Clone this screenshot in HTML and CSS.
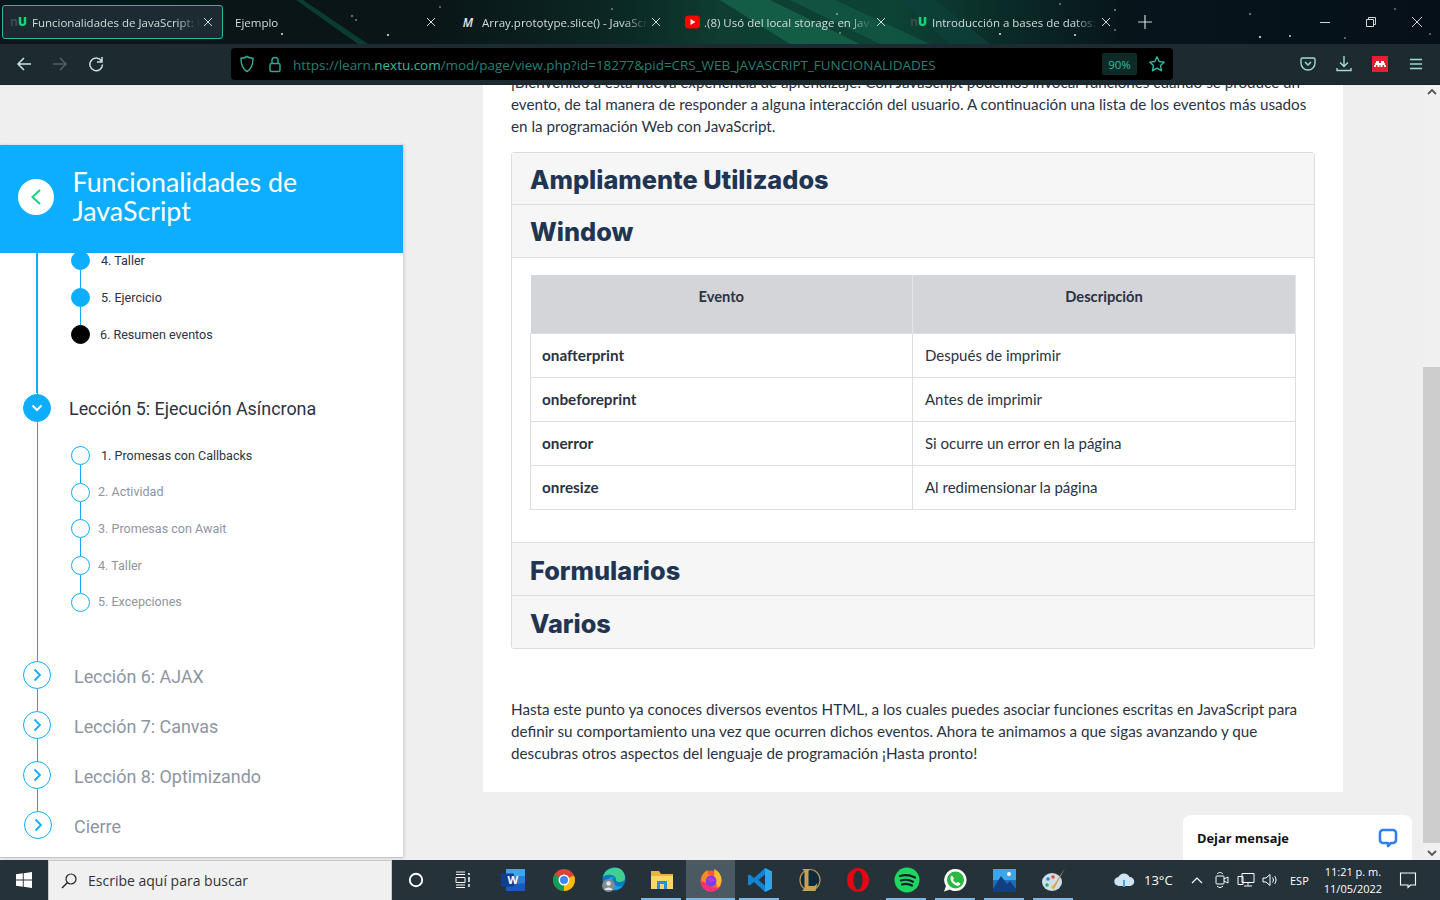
FILE: index.html
```html
<!DOCTYPE html>
<html lang="es">
<head>
<meta charset="utf-8">
<title>Funcionalidades de JavaScript</title>
<link rel="stylesheet" href="styles.css">
</head>
<body>
<div class="browser">
  <header class="tabbar">
    <svg class="space" width="1440" height="44" viewBox="0 0 1440 44" aria-hidden="true">
      <defs>
        <linearGradient id="bg" x1="0" x2="1" y1="0" y2="0">
          <stop offset="0" stop-color="#0c1519"/><stop offset=".3" stop-color="#0a1517"/><stop offset=".44" stop-color="#0b2a25"/><stop offset=".5" stop-color="#0e3d32"/><stop offset=".62" stop-color="#0c4335"/><stop offset=".7" stop-color="#0a2a27"/><stop offset=".78" stop-color="#07151b"/><stop offset="1" stop-color="#061018"/>
        </linearGradient>
      </defs>
      <rect width="1440" height="44" fill="url(#bg)"/>
      <polygon points="296,0 303,0 368,44 358,44" fill="#0a3d30"/>
      <polygon points="720,0 770,0 860,44 790,44" fill="#17694f" opacity=".7"/>
      <polygon points="790,0 835,0 930,44 880,44" fill="#115a46" opacity=".75"/>
      <polygon points="900,0 935,0 990,44 950,44" fill="#0d423a" opacity=".7"/>
      <g fill="#dfe8e8">
        <circle cx="282" cy="34" r="1"/><circle cx="352" cy="16" r=".8"/><circle cx="356" cy="20" r=".7"/><circle cx="388" cy="35" r="1.100"/><circle cx="440" cy="7" r=".7"/><circle cx="540" cy="27" r=".8"/><circle cx="612" cy="9" r=".7"/>
        <circle cx="837" cy="14" r=".8"/><circle cx="840" cy="33" r=".7"/><circle cx="1000" cy="34" r="1"/><circle cx="1075" cy="35" r="1"/><circle cx="1115" cy="10" r=".8"/><circle cx="1250" cy="14" r=".8"/><circle cx="1115" cy="30" r=".7"/><circle cx="1260" cy="37" r="1.100"/><circle cx="1290" cy="36" r=".9"/><circle cx="1345" cy="38" r=".7"/><circle cx="1395" cy="9" r=".7"/><circle cx="1430" cy="34" r=".7"/><circle cx="1060" cy="4" r=".7"/>
      </g>
    </svg>
    <div class="tab tab-active">
      <span class="tab-icon nu"><i>n</i>U</span><span class="tab-title">Funcionalidades de JavaScript: F</span><svg class="tab-close" width="10" height="10" viewBox="0 0 10 10"><path d="M1 1l8 8M9 1L1 9"/></svg>
    </div>
    <div class="tab">
      <span class="tab-title">Ejemplo</span><svg class="tab-close" width="10" height="10" viewBox="0 0 10 10"><path d="M1 1l8 8M9 1L1 9"/></svg>
    </div>
    <div class="tab">
      <span class="tab-icon mdn">M</span><span class="tab-title">Array.prototype.slice() - JavaScript</span><svg class="tab-close" width="10" height="10" viewBox="0 0 10 10"><path d="M1 1l8 8M9 1L1 9"/></svg>
    </div>
    <div class="tab">
      <svg class="tab-icon tab-icon-yt" width="16" height="16" viewBox="0 0 16 16"><rect y="1.500" width="15" height="13" rx="3.500" fill="#f00"/><polygon points="5.500,5 10.500,8 5.500,11" fill="#fff"/></svg><span class="tab-title">.(8) Usó del local storage en Java</span><svg class="tab-close" width="10" height="10" viewBox="0 0 10 10"><path d="M1 1l8 8M9 1L1 9"/></svg>
    </div>
    <div class="tab">
      <span class="tab-icon nu"><i>n</i>U</span><span class="tab-title">Introducción a bases de datos: I</span><svg class="tab-close" width="10" height="10" viewBox="0 0 10 10"><path d="M1 1l8 8M9 1L1 9"/></svg>
    </div>
    <svg class="newtab" width="14" height="14" viewBox="0 0 14 14"><path d="M7 0v14M0 7h14" stroke="#cfd8d8" stroke-width="1.200"/></svg>
    <div class="winctl">
      <svg width="12" height="12" viewBox="0 0 12 12"><path d="M1 6.500h10" stroke="#cfd8d8"/></svg>
      <svg width="12" height="12" viewBox="0 0 12 12"><path d="M1.500 3.500h7v7h-7zM3.500 3.500v-2h7v7h-2" fill="none" stroke="#cfd8d8"/></svg>
      <svg width="12" height="12" viewBox="0 0 12 12"><path d="M1 1l10 10M11 1L1 11" stroke="#cfd8d8"/></svg>
    </div>
  </header>

  <nav class="toolbar">
    <div class="navbtns">
      <svg width="16" height="16" viewBox="0 0 16 16"><path d="M15 8H2M8 2L2 8l6 6" fill="none" stroke="#c9e4e0" stroke-width="1.500"/></svg>
      <svg width="16" height="16" viewBox="0 0 16 16"><path d="M1 8h13M8 2l6 6-6 6" fill="none" stroke="#4e625f" stroke-width="1.500"/></svg>
      <svg width="16" height="16" viewBox="0 0 16 16"><path d="M13.500 5A6.300 6.300 0 1 0 14.500 8.500M14 1v5H9" fill="none" stroke="#c9e4e0" stroke-width="1.500"/></svg>
    </div>
    <div class="urlbar">
      <svg class="url-shield" width="16" height="18" viewBox="0 0 16 18"><path d="M8 1.500c2 1.300 4 1.800 6 1.800 0 6-1 10.500-6 13.200-5-2.700-6-7.200-6-13.200 2 0 4-.5 6-1.800z" fill="none" stroke="#2fa593" stroke-width="1.500"/></svg>
      <svg class="url-lock" width="14" height="17" viewBox="0 0 14 17"><rect x="2" y="7.500" width="10" height="8" rx="1.500" fill="none" stroke="#2fa593" stroke-width="1.500"/><path d="M4 7.500V4.500a3 3 0 0 1 6 0v3" fill="none" stroke="#2fa593" stroke-width="1.500"/></svg>
      <span class="url-text">https://learn.<b>nextu.com</b>/mod/page/view.php?id=18277&amp;pid=CRS_WEB_JAVASCRIPT_FUNCIONALIDADES</span>
      <span class="zoom-badge">90%</span>
      <svg class="url-star" width="18" height="18" viewBox="0 0 18 18"><path d="M9 1.800l2.200 4.700 5.100.6-3.800 3.500 1 5.100L9 13.200l-4.500 2.500 1-5.100L1.700 7.100l5.100-.6z" fill="none" stroke="#35b8a5" stroke-width="1.400" stroke-linejoin="round"/></svg>
    </div>
    <div class="toolicons">
      <svg width="16" height="16" viewBox="0 0 16 16"><path d="M2.500 2h11A1.500 1.500 0 0 1 15 3.500V7A7 7 0 0 1 1 7V3.500A1.500 1.500 0 0 1 2.500 2z" fill="none" stroke="#9fdcd3" stroke-width="1.400"/><path d="M5 6l3 3 3-3" fill="none" stroke="#9fdcd3" stroke-width="1.500"/></svg>
      <svg width="16" height="18" viewBox="0 0 16 18"><path d="M8 1v10M4 7.500L8 11.500l4-4M1 13v2.500h14V13" fill="none" stroke="#9fdcd3" stroke-width="1.400"/></svg>
      <svg width="16" height="16" viewBox="0 0 16 16"><rect width="16" height="16" fill="#e3202f"/><path d="M4 5h3v2H4zM9 5h3v2H9zM3 7h10v2H3zM2 9h2v2H2zM5.500 9h2v2h-2zM8.500 9h2v2h-2zM12 9h2v2h-2z" fill="#fff"/></svg>
      <svg class="menu-icon" width="14" height="14" viewBox="0 0 14 14"><path d="M1 2.500h12M1 7h12M1 11.500h12" stroke="#9fdcd3" stroke-width="1.300"/></svg>
    </div>
  </nav>

  <main class="viewport">
    <aside class="sidebar">
      <div class="course-head">
        <span class="back-circle"><svg width="12" height="16" viewBox="0 0 12 16"><path d="M10 1L2.500 8l7.500 7" fill="none" stroke="#19d27c" stroke-width="2"/></svg></span>
        <h2 class="course-title">Funcionalidades de JavaScript</h2>
      </div>
      <div class="outline">
        <ul class="steps steps-top">
          <li class="step step-done"><span>4. Taller</span></li>
          <li class="step step-done"><span>5. Ejercicio</span></li>
          <li class="step step-current"><span>6. Resumen eventos</span></li>
        </ul>
        <div class="lesson lesson-open">
          <span class="lesson-dot lesson-dot-on"><svg width="14" height="14" viewBox="0 0 14 14"><path d="M2.500 4.500L7 9l4.500-4.500" fill="none" stroke="#fff" stroke-width="2"/></svg></span>
          <span class="lesson-name">Lección 5: Ejecución Asíncrona</span>
        </div>
        <ul class="steps steps-open">
          <li class="step step-active"><span>1. Promesas con Callbacks</span></li>
          <li class="step"><span>2. Actividad</span></li>
          <li class="step"><span>3. Promesas con Await</span></li>
          <li class="step"><span>4. Taller</span></li>
          <li class="step"><span>5. Excepciones</span></li>
        </ul>
        <div class="lesson"><span class="lesson-dot"><svg width="14" height="14" viewBox="0 0 14 14"><path d="M4.500 1.500L10 7l-5.500 5.500" fill="none" stroke="#0dadff" stroke-width="1.800"/></svg></span><span class="lesson-name">Lección 6: AJAX</span></div>
        <div class="lesson"><span class="lesson-dot"><svg width="14" height="14" viewBox="0 0 14 14"><path d="M4.500 1.500L10 7l-5.500 5.500" fill="none" stroke="#0dadff" stroke-width="1.800"/></svg></span><span class="lesson-name">Lección 7: Canvas</span></div>
        <div class="lesson"><span class="lesson-dot"><svg width="14" height="14" viewBox="0 0 14 14"><path d="M4.500 1.500L10 7l-5.500 5.500" fill="none" stroke="#0dadff" stroke-width="1.800"/></svg></span><span class="lesson-name">Lección 8: Optimizando</span></div>
        <div class="lesson lesson-last"><span class="lesson-dot"><svg width="14" height="14" viewBox="0 0 14 14"><path d="M4.500 1.500L10 7l-5.500 5.500" fill="none" stroke="#0dadff" stroke-width="1.800"/></svg></span><span class="lesson-name">Cierre</span></div>
      </div>
    </aside>

    <article class="content">
      <p class="intro">¡Bienvenido a esta nueva experiencia de aprendizaje! Con JavaScript podemos invocar funciones cuando se produce un evento, de tal manera de responder a alguna interacción del usuario. A continuación una lista de los eventos más usados en la programación Web con JavaScript.</p>
      <section class="accordion">
        <h3 class="acc-head acc-first">Ampliamente Utilizados</h3>
        <h3 class="acc-head">Window</h3>
        <div class="acc-body">
          <table class="events">
            <thead><tr><th>Evento</th><th>Descripción</th></tr></thead>
            <tbody>
              <tr><td>onafterprint</td><td>Después de imprimir</td></tr>
              <tr><td>onbeforeprint</td><td>Antes de imprimir</td></tr>
              <tr><td>onerror</td><td>Si ocurre un error en la página</td></tr>
              <tr><td>onresize</td><td>Al redimensionar la página</td></tr>
            </tbody>
          </table>
        </div>
        <h3 class="acc-head acc-form">Formularios</h3>
        <h3 class="acc-head acc-last">Varios</h3>
      </section>
      <p class="outro">Hasta este punto ya conoces diversos eventos HTML, a los cuales puedes asociar funciones escritas en JavaScript para definir su comportamiento una vez que ocurren dichos eventos. Ahora te animamos a que sigas avanzando y que descubras otros aspectos del lenguaje de programación ¡Hasta pronto!</p>
    </article>

    <div class="scrollbar">
      <svg width="10" height="8" viewBox="0 0 10 8"><path d="M1 6l4-4 4 4" fill="none" stroke="#555" stroke-width="1.800"/></svg>
      <div class="scroll-thumb"></div>
      <svg width="10" height="8" viewBox="0 0 10 8"><path d="M1 2l4 4 4-4" fill="none" stroke="#555" stroke-width="1.800"/></svg>
    </div>

    <div class="chat">
      <span>Dejar mensaje</span>
      <svg width="20" height="20" viewBox="0 0 20 20"><path d="M5 2h10a3 3 0 0 1 3 3v7a3 3 0 0 1-3 3h-2l-3 3v-3H5a3 3 0 0 1-3-3V5a3 3 0 0 1 3-3z" fill="none" stroke="#2f80ed" stroke-width="2.600" stroke-linejoin="round"/></svg>
    </div>
  </main>

  <footer class="taskbar">
    <div class="start"><svg width="16" height="16" viewBox="0 0 16 16"><path d="M0 2.300l6.800-1v6.300H0zM7.700 1.200L16 0v7.600H7.700zM0 8.400h6.800v6.300l-6.800-1zM7.700 8.400H16V16l-8.300-1.200z" fill="#fff"/></svg></div>
    <div class="searchbox">
      <svg width="18" height="18" viewBox="0 0 18 18"><circle cx="11" cy="7" r="5" fill="none" stroke="#222" stroke-width="1.200"/><path d="M7.500 10.500L2 16" stroke="#222" stroke-width="1.400"/></svg>
      <span>Escribe aquí para buscar</span>
    </div>
    <div class="taskicons">
      <span class="ti ti-cortana"><svg width="16" height="16" viewBox="0 0 16 16"><circle cx="8" cy="8" r="6.200" fill="none" stroke="#fff" stroke-width="1.900"/></svg></span>
      <span class="ti ti-view"><svg width="18" height="18" viewBox="0 0 18 18"><path d="M1 1h9M1 3.500h9M1 14h9M1 16.500h9M1 6.500h9v5H1z" fill="none" stroke="#fff"/><path d="M14 2v2M14 6v5M14 13v3" stroke="#fff" stroke-width="1.500"/></svg></span>
      <span class="ti ti-word"><svg width="24" height="22" viewBox="0 0 24 22"><rect x="5" y="0" width="19" height="22" rx="1" fill="#2b7cd3"/><rect x="5" y="0" width="19" height="7" fill="#41a5ee"/><rect x="5" y="14.500" width="19" height="7.500" fill="#185abd"/><rect y="4.500" width="13" height="13" rx="1" fill="#103f91"/><text x="6.500" y="14.700" class="wordw">W</text></svg></span>
      <span class="ti"><svg width="24" height="24" viewBox="0 0 24 24"><circle cx="12" cy="12" r="11" fill="#db4437"/><path d="M12 12L22 7.500A11 11 0 0 1 12 23z" fill="#fbbc05"/><path d="M12 12L12 23A11 11 0 0 1 2.500 6.500z" fill="#0f9d58"/><circle cx="12" cy="12" r="5.500" fill="#fff"/><circle cx="12" cy="12" r="4" fill="#4285f4"/></svg></span>
      <span class="ti"><svg width="26" height="26" viewBox="0 0 26 26"><circle cx="14" cy="12" r="11.500" fill="#0a7ac2"/><path d="M3 10C5 2 13 0 18 1c4 1 7 5 7 10 0 3-3 4-6 4-2 0-3-1-3-2 1-5-9-7-13-3z" fill="#3fcf8e"/><path d="M8 14c0-4 5-5 7-3-3 0-3 3-1 6 2 3 6 3 9 1-2 3-5 5-9 5-3 0-6-4-6-9z" fill="#1a9fe0"/><circle cx="8.500" cy="18.500" r="6.500" fill="#7f8b90"/><circle cx="8.500" cy="16.500" r="2.300" fill="#e3e6e8"/><path d="M4.500 23c0-3.500 8-3.500 8 0z" fill="#e3e6e8"/></svg></span>
      <span class="ti ti-run"><svg width="22" height="20" viewBox="0 0 22 20"><path d="M0 1h8l2 3h12v15H0z" fill="#e9b33a"/><rect y="6" width="22" height="13" fill="#ffd766"/><rect x="6" y="11" width="10" height="8" fill="#2b8fd8"/><rect x="9" y="14" width="4" height="5" fill="#ffd766"/></svg></span>
      <span class="ti ti-on"><svg width="24" height="24" viewBox="0 0 24 24"><circle cx="12" cy="13" r="10.500" fill="#ff5a3c"/><path d="M15 1c5 2 8 7 7.500 12-.5 4-2.500 7-5 8.500 1-3 0-8-3-11 1-2 1-5 .5-9.500z" fill="#ffbd2e"/><path d="M2 14c0 5 5 9.500 10 9.500 4 0 8-2 10-6-3 3-9 3-12 0-2-2-3-3-8-3.500z" fill="#ff2d7a"/><circle cx="12" cy="13" r="5.500" fill="#7542e5"/><path d="M8 11c2-2.500 6-2.500 8 .5-1 3.500-6.500 4-8-.5z" fill="#b833e1"/><path d="M2 12C3 6 6 3 9 2 8 5 9 7 12 7 8 8 6 11 7 15z" fill="#ff8a1f"/></svg></span>
      <span class="ti ti-run"><svg width="26" height="26" viewBox="0 0 26 26"><path d="M18 1l7 3.500v17L18 25 7 15l-4.500 3.500L1 17.500V8.500L2.500 7.500 7 11zM18 7.500L11.500 13l6.500 5.500z" fill="#0e86d4"/><path d="M18 1l7 3.500v17L18 25z" fill="#2aa7ed"/></svg></span>
      <span class="ti"><svg width="24" height="26" viewBox="0 0 24 26"><ellipse cx="13" cy="13" rx="10" ry="10.500" fill="#0c2a3a" stroke="#b8985a" stroke-width="1.200"/><path d="M5 2h8l-1.500 2v15h6l3-3-2 8H5l2.500-3V4z" fill="#c8a05a"/></svg></span>
      <span class="ti"><svg width="24" height="26" viewBox="0 0 24 26"><ellipse cx="12" cy="13" rx="11" ry="12" fill="#e30613"/><ellipse cx="12" cy="13" rx="4.500" ry="9.500" fill="#25323a"/></svg></span>
      <span class="ti ti-run"><svg width="26" height="26" viewBox="0 0 26 26"><circle cx="13" cy="13" r="12.500" fill="#1ed760"/><path d="M6 9c5-1.500 10-1 15 1.500M7 13.500c4-1.200 8.500-.8 12 1.300M8 17.500c3-1 7-.8 10 1" fill="none" stroke="#10202a" stroke-width="2.200" stroke-linecap="round"/></svg></span>
      <span class="ti ti-run"><svg width="25" height="25" viewBox="0 0 25 25"><path d="M12.500 1a11 11 0 0 1 0 22c-2 0-4-.5-5.500-1.500L1 23.500l2-5.500A11 11 0 0 1 12.500 1z" fill="#fff"/><circle cx="12.500" cy="12" r="8.500" fill="#2bb741"/><path d="M9 7.500l2 3-1 1.500c1 1.500 2 2.500 3.500 3l1.500-1 2.500 1.500c-.5 2-2.500 2.500-4 2-3-1-5.500-3.500-6-6.500-.2-1.500.5-3 1.500-3.500z" fill="#fff"/></svg></span>
      <span class="ti ti-run"><svg width="23" height="23" viewBox="0 0 23 23"><rect width="23" height="23" fill="#1b6fb5"/><rect width="23" height="11" fill="#39a7e8"/><circle cx="16" cy="5" r="2" fill="#fff"/><path d="M0 20L8 7l6 8 3-3 6 8v3H0z" fill="#123f83"/></svg></span>
      <span class="ti ti-run"><svg width="26" height="26" viewBox="0 0 26 26"><ellipse cx="11" cy="15" rx="10" ry="9" fill="#cfdfe8"/><circle cx="7" cy="12" r="1.800" fill="#2f80ed"/><circle cx="12" cy="10" r="1.800" fill="#e74c3c"/><circle cx="6" cy="18" r="1.800" fill="#27ae60"/><circle cx="12" cy="20" r="1.800" fill="#f1c40f"/><path d="M24 1L14 20l-2 3 1-5z" fill="#d39c4a"/></svg></span>
    </div>
    <div class="tray">
      <svg width="22" height="16" viewBox="0 0 22 16"><path d="M6 14a4.500 4.500 0 0 1-.5-9A6 6 0 0 1 16.500 5 4.500 4.500 0 0 1 17 14z" fill="#cfe4f5"/><path d="M11 8v7" stroke="#4aa3e0" stroke-width="2"/></svg>
      <span class="temp">13°C</span>
      <svg class="tray-chev" width="12" height="8" viewBox="0 0 12 8"><path d="M1 7l5-5 5 5" fill="none" stroke="#fff" stroke-width="1.200"/></svg>
      <svg class="tray-meet" width="16" height="18" viewBox="0 0 16 18"><rect x="2" y="5" width="8" height="8" rx="1" fill="none" stroke="#fff"/><path d="M10 8l4-2v6l-4-2M3 3c2-2 4-2 6 0M3 15c2 2 4 2 6 0" fill="none" stroke="#fff"/></svg>
      <svg class="tray-net" width="18" height="16" viewBox="0 0 18 16"><path d="M5 1.500h12v9H5zM1 4.500h5v8H1zM11 10.500v3M7 14h8" fill="#25323a" stroke="#fff"/></svg>
      <svg class="tray-net" width="16" height="14" viewBox="0 0 16 14"><path d="M1 5h3l4-3.500v11L4 9H1zM10.500 4.500c1.200 1.500 1.200 3.500 0 5M12.500 3c2 2.300 2 5.700 0 8" fill="none" stroke="#fff"/></svg>
      <span class="lang">ESP</span>
      <div class="clock"><span>11:21 p. m.</span><span>11/05/2022</span></div>
      <svg class="notif" width="18" height="18" viewBox="0 0 18 18"><path d="M1.500 2h15v12h-5l-2.500 2.500V14h-7.500z" fill="none" stroke="#fff" stroke-width="1.100"/></svg>
    </div>
  </footer>
</div>
</body>
</html>
```
FILE: styles.css
```css
* { box-sizing: border-box; }
html, body { margin: 0; height: 100%; overflow: hidden; }
body { font-family: "Open Sans", "Noto Sans", sans-serif; }
ul { list-style: none; margin: 0; padding: 0; }

.browser { width: 1440px; height: 900px; display: flex; flex-direction: column; }

/* Tab strip */
.tabbar { position: relative; flex: 0 0 44px; display: flex; align-items: center; padding-left: 2px; overflow: hidden; background: #0b1518; }
.space { position: absolute; left: 0; top: 0; }
.tab { position: relative; flex: 0 0 225px; min-width: 0; height: 34px; display: flex; align-items: center; padding: 0 13px 0 8px; color: #d3dcdc; font-size: 11.500px; }
.tab-active { flex-basis: 221px; margin-right: 4px; border: 1px solid #2cb8a0; border-radius: 3px; background: #1c2a31; padding: 0 6px 0 7px; }
.tab-icon { flex: 0 0 16px; width: 16px; margin-right: 6px; text-align: right; }
.tab-icon-yt { margin-right: 3px; }
.nu { color: #19d27c; font-weight: 800; font-size: 12px; line-height: 1; }
.nu i { font-style: normal; color: #3d4b52; font-weight: 700; }
.mdn { color: #e8e8e8; font-style: italic; font-weight: 600; font-size: 12px; text-align: center; }
.tab-title { flex: 1; min-width: 0; overflow: hidden; white-space: nowrap; -webkit-mask-image: linear-gradient(90deg, #000 86%, transparent); mask-image: linear-gradient(90deg, #000 86%, transparent); }
.tab-close { flex: 0 0 10px; margin-left: 3px; margin-right: 3px; stroke: #d3dcdc; stroke-width: 1; }
.newtab { position: relative; margin-left: 11px; }
.winctl { position: absolute; right: 17px; top: 16px; display: flex; gap: 34px; }

/* Toolbar */
.toolbar { flex: 0 0 41px; display: flex; align-items: center; background: #1d2a30; border-bottom: 1px solid #18242a; }
.navbtns { flex: 0 0 231px; display: flex; gap: 20px; padding-left: 16px; }
.urlbar { flex: 0 0 942px; height: 32px; display: flex; align-items: center; background: #000; border-radius: 4px; padding: 0 7px 0 8px; }
.url-lock { margin-left: 13px; }
.url-text { flex: 1; margin-left: 11px; padding-top: 1px; color: #267f73; font-size: 13.500px; white-space: nowrap; letter-spacing: -.04px; }
.url-text b { color: #37b7a3; font-weight: 400; }
.zoom-badge { width: 35px; height: 22px; margin-right: 11px; display: flex; align-items: center; justify-content: center; background: #0c2b26; border-radius: 2px; color: #35b8a5; font-size: 11.500px; }
.toolicons { flex: 1; display: flex; align-items: center; gap: 20px; padding-left: 127px; }
.menu-icon { margin-left: 1px; }

/* Page */
.viewport { position: relative; flex: 1; min-height: 0; display: flex; background: #efefef; padding-left: 483px; overflow: hidden; }
.sidebar { position: absolute; left: 0; top: 60px; width: 403px; height: 713px; display: flex; flex-direction: column; background: #fff; border-bottom: 1px solid #c6c6c6; box-shadow: 1px 0 3px rgba(0,0,0,.16); font-family: Roboto, sans-serif; }
.course-head { flex: 0 0 108px; display: flex; align-items: center; padding: 0 90px 0 18px; background: #0dadff; }
.back-circle { flex: 0 0 36px; height: 36px; margin-bottom: 5px; display: flex; align-items: center; justify-content: center; border-radius: 50%; background: #fff; }
.course-title { margin: 0 0 5px 18.500px; color: #fff; font-family: Lato, sans-serif; font-weight: 400; font-size: 26.800px; line-height: 29px; }
.outline { position: relative; flex: 1; min-height: 0; overflow: hidden; padding-left: 23px; }
.outline::before { content: ""; position: absolute; left: 36px; top: 0; width: 2px; height: 140px; background: #0dadff; }
.outline::after { content: ""; position: absolute; left: 37px; top: 140px; width: 1px; height: 420px; background: #0dadff; }

.steps { position: relative; z-index: 1; margin-left: 48px; }
.steps-top { margin-top: -11px; height: 136px; }
.steps-open { height: 212.500px; margin-top: -1px; }
.steps-open .step { height: 36.670px; }
.step { position: relative; height: 37px; display: flex; align-items: center; padding-left: 30px; font-size: 12.550px; color: #8d95a2; }
.step::before { content: ""; box-sizing: border-box; position: absolute; left: 0; top: 9px; width: 19px; height: 19px; border-radius: 50%; background: #fff; border: 1.500px solid #0dadff; }
.step::after { content: ""; position: absolute; left: 9px; top: 28px; width: 1px; height: 18px; background: #0dadff; }
.step:last-child::after { display: none; }
.step-active { color: #2b3242; }
.step:nth-child(n+2):not(.step-done):not(.step-current) { padding-left: 27px; }
.step-done, .step-current { color: #2b3242; }
.step-done::before { background: #0dadff; }
.step-current::before { background: #000; border-color: #000; }
.step-current { padding-left: 29px; }

.lesson { position: relative; z-index: 1; height: 50px; display: flex; align-items: center; }
.lesson-open { height: 60px; }
.lesson-dot { flex: 0 0 28px; height: 28px; display: flex; align-items: center; justify-content: center; border-radius: 50%; background: #fff; border: 1.300px solid #0dadff; }
.lesson-dot-on { background: #0dadff; }
.lesson-name { margin-left: 23px; padding-top: 4px; color: #8d95a2; font-size: 17.900px; }
.lesson-open .lesson-name { margin-left: 18px; padding-top: 0; color: #2b3242; }
.lesson-last .lesson-dot { margin-left: 1px; }
.lesson-last .lesson-name { margin-left: 22px; }

.content { width: 860px; height: 707px; padding: 0 28px; background: #fff; font-family: Lato, sans-serif; font-size: 15.220px; line-height: 21.600px; color: #2b3242; overflow: hidden; }
.intro { margin: -12.700px 0 14.900px; }
.accordion { border: 1px solid #dcdcdc; border-radius: 3px; }
.acc-head { margin: 0; height: 53px; padding: 2px 0 0 18px; display: flex; align-items: center; background: #f6f6f6; border-bottom: 1px solid #dedede; font-family: Inter, Lato, sans-serif; font-size: 25.300px; font-weight: 800; color: #1f3552; }
.acc-first { height: 52px; }
.acc-form { height: 54px; border-top: 1px solid #dedede; }
.acc-last { height: 52px; border-bottom: 0; }
.acc-body { padding: 17px 18px 32px; }
.events { width: 766px; border-collapse: collapse; table-layout: fixed; }
.events th { height: 59px; padding: 0 0 15px; background: #d4d5d8; border-right: 1px solid #e4e5e7; font-weight: 700; color: #2b3242; font-size: 14.700px; }
.events th:first-child { width: 382px; }
.events td { height: 44px; padding: 0 12px; border: 1px solid #dcdee2; font-size: 15px; }
.events td:first-child { padding-left: 11px; font-weight: 700; font-size: 15.300px; }
.outro { margin: 50px 0 0; }

.scrollbar { position: absolute; right: 0; top: 0; bottom: 0; width: 17px; padding: 3px 0; display: flex; flex-direction: column; align-items: center; justify-content: space-between; background: #f0f0f0; }
.scroll-thumb { position: absolute; left: 0; top: 282px; width: 17px; height: 476px; background: #cdcdcd; }
.scrollbar svg:last-child { margin-top: auto; }
.chat { position: absolute; left: 1183px; bottom: 0; width: 229px; height: 45px; display: flex; align-items: center; justify-content: space-between; padding: 0 14px; background: #fff; border-radius: 8px 8px 0 0; font-family: "Open Sans", sans-serif; font-weight: 700; font-size: 12.800px; color: #111; }

/* Taskbar */
.taskbar { flex: 0 0 40px; display: flex; align-items: center; background: #25323a; color: #fff; }
.start { flex: 0 0 48px; display: flex; justify-content: center; }
.searchbox { flex: 0 0 344px; height: 40px; display: flex; align-items: center; gap: 10px; padding-left: 11px; background: #f0f0f0; border: 1px solid #c9c9c9; border-bottom: 0; color: #333; font-size: 14px; }
.taskicons { flex: 0 0 686px; display: flex; align-items: center; }
.ti { position: relative; flex: 0 0 49px; height: 40px; display: flex; align-items: center; justify-content: center; }
.ti-cortana svg { margin-right: 2px; }
.ti-view svg { margin-right: 3px; }
.ti-word svg { margin-right: 3px; }
.ti-on { background: #4b5a62; }
.ti-on::after, .ti-run::after { content: ""; position: absolute; left: 0; right: 0; bottom: 0; height: 2px; background: #76b9ed; }
.ti-run::after { left: 4px; right: 5px; }
.wordw { fill: #fff; font-size: 11px; font-weight: 700; }
.tray { flex: 1; display: flex; align-items: center; font-size: 12px; padding-left: 35px; }
.temp { margin-left: 9px; font-size: 13px; width: 30px; }
.tray-chev { margin-left: 17px; }
.tray-meet { margin-left: 11px; }
.tray-net { margin-left: 7px; }
.lang { margin-left: 12px; font-size: 11px; }
.clock { margin-left: 15px; display: flex; flex-direction: column; gap: 4px; font-size: 11px; line-height: 13px; text-align: center; }
.notif { margin-left: 17px; }
```
